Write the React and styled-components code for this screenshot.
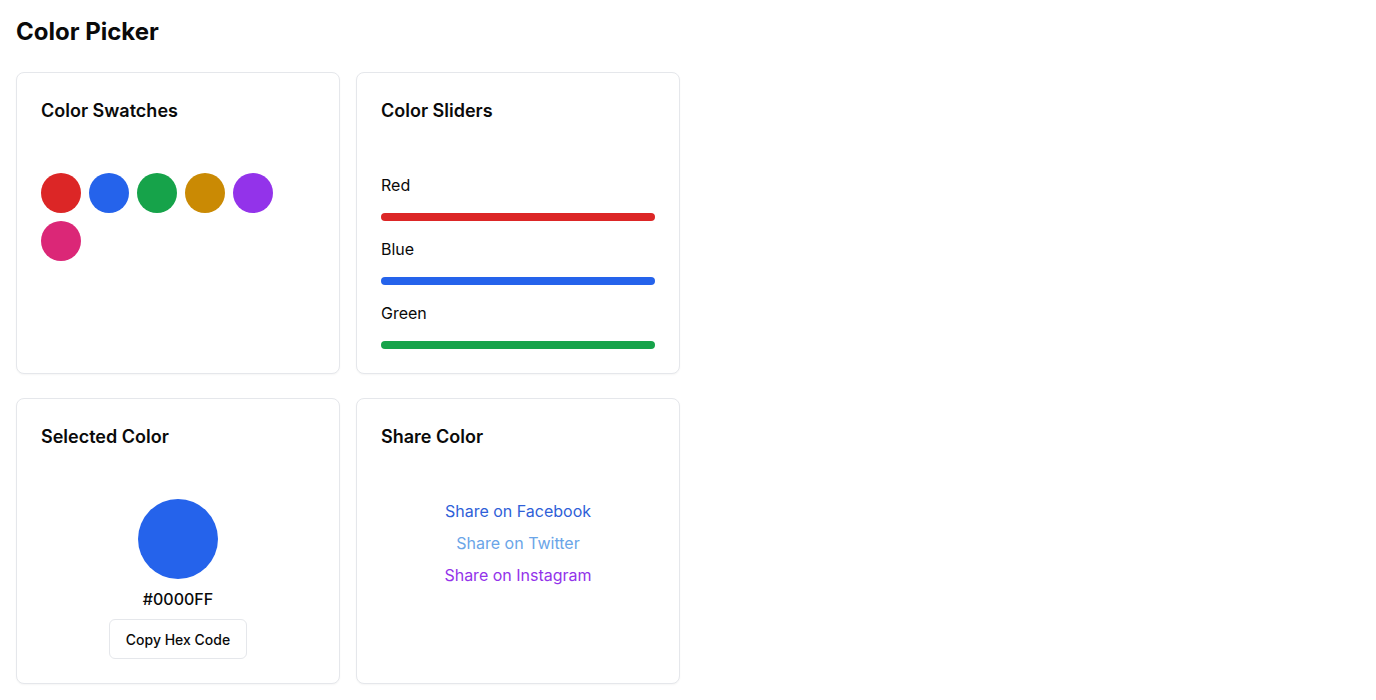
import React from "react";
import styled, { createGlobalStyle } from "styled-components";

const GlobalStyle = createGlobalStyle`
  * { box-sizing: border-box; }
  body {
    margin: 0;
    background: #ffffff;
    color: #0a0a0a;
    font-family: Inter, "Noto Sans", sans-serif;
  }
`;

const Page = styled.div`
  padding: 16px;
`;

const Title = styled.h1`
  margin: 0 0 24px;
  font-size: 24px;
  line-height: 32px;
  font-weight: 700;
`;

const Grid = styled.div`
  display: grid;
  grid-template-columns: repeat(2, 324px);
  column-gap: 16px;
  row-gap: 24px;
`;

const Card = styled.div`
  border: 1px solid #e5e7eb;
  border-radius: 8px;
  background: #fff;
  box-shadow: 0 1px 2px rgba(0, 0, 0, 0.04);
  display: flex;
  flex-direction: column;
`;

const CardHeader = styled.div`
  padding: 24px;
`;

const CardTitle = styled.h3`
  margin: 0;
  font-size: 18px;
  line-height: 28px;
  font-weight: 600;
`;

const CardContent = styled.div`
  padding: 24px;
  display: flex;
  flex-direction: column;
  align-items: ${(p) => (p.$center ? "center" : "stretch")};
  gap: ${(p) => p.$gap || 0}px;
`;

const Swatches = styled.div`
  display: flex;
  flex-wrap: wrap;
  gap: 8px;
`;

const Swatch = styled.button`
  width: 40px;
  height: 40px;
  border-radius: 50%;
  border: none;
  padding: 0;
  background: ${(p) => p.$color};
  cursor: pointer;
`;

const SliderLabel = styled.div`
  font-size: 16px;
  line-height: 24px;
  font-weight: 400;
`;

const SliderTrack = styled.div`
  height: 8px;
  border-radius: 9999px;
  background: ${(p) => p.$color};
`;

const BigSwatch = styled.div`
  width: 80px;
  height: 80px;
  border-radius: 50%;
  background: ${(p) => p.$color};
`;

const HexText = styled.div`
  font-size: 16px;
  line-height: 24px;
  font-weight: 500;
`;

const Button = styled.button`
  height: 40px;
  padding: 0 16px;
  border: 1px solid #e5e7eb;
  border-radius: 6px;
  background: #fff;
  font-family: inherit;
  font-size: 14px;
  font-weight: 500;
  color: #0a0a0a;
  cursor: pointer;
`;

const ShareLink = styled.a`
  font-size: 16px;
  line-height: 24px;
  color: ${(p) => p.$color};
  text-decoration: none;
`;

const swatchColors = ["#dc2626", "#2563eb", "#16a34a", "#ca8a04", "#9333ea", "#db2777"];
const sliders = [
  { label: "Red", color: "#dc2626" },
  { label: "Blue", color: "#2563eb" },
  { label: "Green", color: "#16a34a" },
];
const shares = [
  { label: "Share on Facebook", color: "#2f5fd8" },
  { label: "Share on Twitter", color: "#6aa5e8" },
  { label: "Share on Instagram", color: "#9333ea" },
];

export default function App() {
  return (
    <Page>
      <GlobalStyle />
      <Title>Color Picker</Title>
      <Grid>
        <Card>
          <CardHeader>
            <CardTitle>Color Swatches</CardTitle>
          </CardHeader>
          <CardContent>
            <Swatches>
              {swatchColors.map((c) => (
                <Swatch key={c} $color={c} aria-label={c} />
              ))}
            </Swatches>
          </CardContent>
        </Card>
        <Card>
          <CardHeader>
            <CardTitle>Color Sliders</CardTitle>
          </CardHeader>
          <CardContent $gap={16}>
            {sliders.map((s) => (
              <React.Fragment key={s.label}>
                <SliderLabel>{s.label}</SliderLabel>
                <SliderTrack $color={s.color} />
              </React.Fragment>
            ))}
          </CardContent>
        </Card>
        <Card>
          <CardHeader>
            <CardTitle>Selected Color</CardTitle>
          </CardHeader>
          <CardContent $center $gap={8}>
            <BigSwatch $color="#2563eb" />
            <HexText>#0000FF</HexText>
            <Button>Copy Hex Code</Button>
          </CardContent>
        </Card>
        <Card>
          <CardHeader>
            <CardTitle>Share Color</CardTitle>
          </CardHeader>
          <CardContent $center $gap={8}>
            {shares.map((s) => (
              <ShareLink key={s.label} href="#" $color={s.color}>
                {s.label}
              </ShareLink>
            ))}
          </CardContent>
        </Card>
      </Grid>
    </Page>
  );
}
